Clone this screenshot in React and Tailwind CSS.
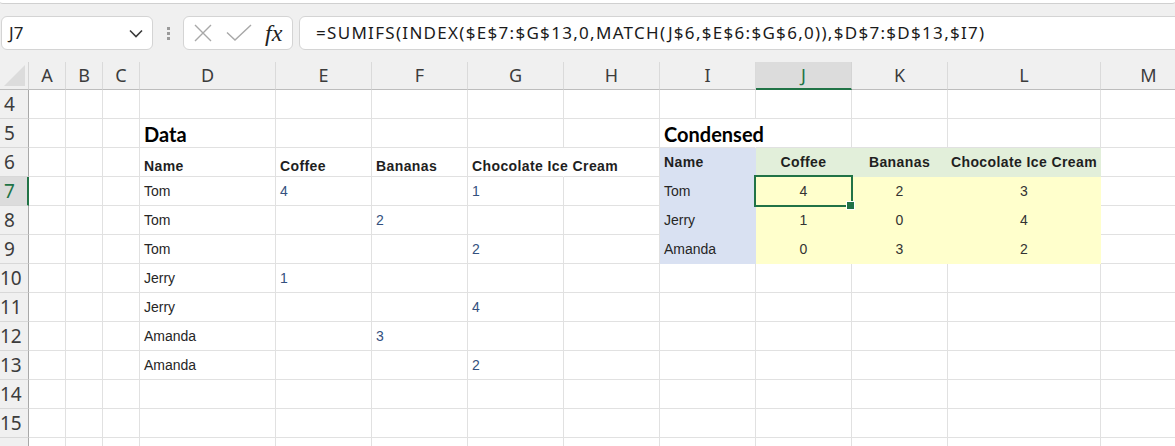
import React from "react";

const COLS = [
  { l: "A", w: "w-[37px]" },
  { l: "B", w: "w-[37px]" },
  { l: "C", w: "w-[37px]" },
  { l: "D", w: "w-[136px]" },
  { l: "E", w: "w-[96px]" },
  { l: "F", w: "w-[96px]" },
  { l: "G", w: "w-[96px]" },
  { l: "H", w: "w-[96px]" },
  { l: "I", w: "w-[96px]" },
  { l: "J", w: "w-[96px]" },
  { l: "K", w: "w-[96px]" },
  { l: "L", w: "w-[153px]" },
  { l: "M", w: "w-[96px]" },
];

const ROWS = [4, 5, 6, 7, 8, 9, 10, 11, 12, 13, 14, 15, 16];

const dataRows = {
  7: { D: "Tom", E: "4", G: "1" },
  8: { D: "Tom", F: "2" },
  9: { D: "Tom", G: "2" },
  10: { D: "Jerry", E: "1" },
  11: { D: "Jerry", G: "4" },
  12: { D: "Amanda", F: "3" },
  13: { D: "Amanda", G: "2" },
};

const condensed = {
  7: ["Tom", "4", "2", "3"],
  8: ["Jerry", "1", "0", "4"],
  9: ["Amanda", "0", "3", "2"],
};

const CELL = "flex h-full shrink-0 border-r border-b px-[4px] whitespace-nowrap";
const PLAIN = "bg-white border-[#e1e1e1] items-center";
const TXT = "text-[14px] text-[#262626] font-['Liberation_Sans',Arial,sans-serif]";
const BOLD = "text-[14px] leading-[16px] font-bold tracking-[0.4px] text-[#1f1f1f] font-['Liberation_Sans',Arial,sans-serif]";
const NUM = "text-[14px] text-[#34507e] font-['Liberation_Sans',Arial,sans-serif]";
const TITLE = "text-[20px] font-bold text-black font-['Lato','Noto_Sans',sans-serif] pt-[2px]";

function cellContent(row, col) {
  if (row === 5 && col === "D")
    return { cls: PLAIN, node: <span className={TITLE}>Data</span> };
  if (row === 5 && col === "I")
    return {
      cls: "bg-white border-[#e1e1e1] border-r-white items-center relative z-10 overflow-visible",
      node: <span className={TITLE}>Condensed</span>,
    };
  if (row === 6) {
    const m = { D: "Name", E: "Coffee", F: "Bananas" };
    if (m[col]) {
      return { cls: "bg-white border-[#e1e1e1] items-end pb-[2px]", node: <span className={BOLD}>{m[col]}</span> };
    }
    if (col === "G")
      return {
        cls: "bg-white border-[#e1e1e1] border-r-white items-end pb-[2px] relative z-10 overflow-visible",
        node: <span className={BOLD}>Chocolate Ice Cream</span>,
      };
    if (col === "I")
      return { cls: "bg-[#d9e1f2] border-[#d9e1f2] items-center", node: <span className={BOLD}>Name</span> };
    const h = { J: "Coffee", K: "Bananas", L: "Chocolate Ice Cream" };
    if (h[col])
      return {
        cls: "bg-[#e2efda] border-[#e2efda] items-center justify-center",
        node: <span className={BOLD}>{h[col]}</span>,
      };
  }
  if (condensed[row]) {
    const idx = { I: 0, J: 1, K: 2, L: 3 }[col];
    if (idx === 0)
      return {
        cls: "bg-[#d9e1f2] border-[#d9e1f2] items-center",
        node: <span className={TXT}>{condensed[row][0]}</span>,
      };
    if (idx !== undefined)
      return {
        cls: "bg-[#ffffcc] border-[#ffffcc] items-center justify-center",
        node: (
          <span className="text-[14px] text-[#333333] font-['Liberation_Sans',Arial,sans-serif]">
            {condensed[row][idx]}
          </span>
        ),
      };
  }
  if (dataRows[row] && dataRows[row][col]) {
    const v = dataRows[row][col];
    return { cls: PLAIN, node: <span className={col === "D" ? TXT : NUM}>{v}</span> };
  }
  return { cls: PLAIN, node: null };
}

function XIcon() {
  return (
    <svg width="20" height="20" viewBox="0 0 20 20">
      <path d="M2 2 L18 18 M18 2 L2 18" stroke="#a8a8a8" strokeWidth="1.4" fill="none" />
    </svg>
  );
}

function CheckIcon() {
  return (
    <svg width="26" height="18" viewBox="0 0 26 18">
      <path d="M1 8.5 L9 16 L25 1" stroke="#a8a8a8" strokeWidth="1.4" fill="none" />
    </svg>
  );
}

function Chevron() {
  return (
    <svg width="14" height="9" viewBox="0 0 14 9">
      <path d="M1 1.5 L7 7.5 L13 1.5" stroke="#3a3a3a" strokeWidth="1.6" fill="none" />
    </svg>
  );
}

export default function App() {
  return (
    <div className="w-[1175px] h-[446px] overflow-hidden bg-[#f0f0f0] relative">
      {/* top strip */}
      <div className="h-[4px] bg-white border-b border-[#d0d0d0] rounded-b-[6px] mx-[-1px]" />

      {/* formula bar */}
      <div className="flex items-center h-[34px] mt-[12px]">
        <div className="shrink-0 ml-[1px] w-[152px] h-full bg-white border border-[#d4d4d4] rounded-[6px] flex items-center justify-between pl-[7px] pr-[9px]">
          <span className="text-[17px] text-[#222] font-['Noto_Sans',sans-serif]">J7</span>
          <Chevron />
        </div>
        <div className="shrink-0 ml-[14px] flex flex-col gap-[2px] w-[3px]">
          <div className="w-[3px] h-[3px] bg-[#9a9a9a]" />
          <div className="w-[3px] h-[3px] bg-[#9a9a9a]" />
          <div className="w-[3px] h-[3px] bg-[#9a9a9a]" />
        </div>
        <div className="shrink-0 ml-[13px] w-[110px] h-full bg-white border border-[#d4d4d4] rounded-[6px] flex items-center pl-[9px]">
          <XIcon />
          <div className="ml-[13px]">
            <CheckIcon />
          </div>
          <span className="ml-[13px] text-[24px] italic text-[#222] font-['Liberation_Serif',serif] leading-none">
            fx
          </span>
        </div>
        <div className="shrink-0 ml-[6px] w-[900px] h-full bg-white border border-[#d4d4d4] rounded-[6px] flex items-center pl-[16px]">
          <span className="text-[17px] tracking-[1.3px] text-[#1a1a1a] font-['Noto_Sans',sans-serif] whitespace-nowrap">
            =SUMIFS(INDEX($E$7:$G$13,0,MATCH(J$6,$E$6:$G$6,0)),$D$7:$D$13,$I7)
          </span>
        </div>
      </div>

      {/* grid */}
      <div className="mt-[12px] relative">
        {/* column header */}
        <div className="flex h-[28px]">
          <div className="w-[29px] shrink-0 h-full border-r border-b border-r-[#d4d4d4] border-b-[#bdbdbd] flex items-end justify-end pb-[3px] pr-[3px]">
            <svg width="21" height="21" viewBox="0 0 21 21">
              <path d="M21 0 L21 21 L0 21 Z" fill="#dcdcdc" />
            </svg>
          </div>
          {COLS.map((c) =>
            c.l === "J" ? (
              <div
                key={c.l}
                className={`${c.w} shrink-0 h-full bg-[#dcdcdc] border-r border-r-[#d4d4d4] border-b-2 border-b-[#217346] flex items-center justify-center text-[18px] text-[#217346] font-['Noto_Sans',sans-serif]`}
              >
                {c.l}
              </div>
            ) : (
              <div
                key={c.l}
                className={`${c.w} shrink-0 h-full border-r border-r-[#dadada] border-b border-b-[#bdbdbd] flex items-center justify-center text-[18px] text-[#3c3c3c] font-['Noto_Sans',sans-serif]`}
              >
                {c.l}
              </div>
            )
          )}
        </div>

        {ROWS.map((r) => (
          <div key={r} className="flex h-[29px]">
            <div
              className={`w-[29px] shrink-0 h-full border-b border-b-[#d8d8d8] flex items-center ${
                r === 7
                  ? "bg-[#dcdcdc] border-r-2 border-r-[#217346] text-[#217346]"
                  : "border-r border-r-[#a8a8a8] text-[#3c3c3c]"
              }`}
            >
              {r !== 16 && (
                <span className="w-[19px] text-center text-[19px] font-['Noto_Sans',sans-serif] leading-none">{r}</span>
              )}
            </div>
            {COLS.map((c) => {
              const { cls, node } = cellContent(r, c.l);
              return (
                <div key={c.l} className={`${CELL} ${c.w} ${cls}`}>
                  {node}
                </div>
              );
            })}
          </div>
        ))}

        {/* selection J7 */}
        <div className="absolute left-[754px] top-[113px] w-[99px] h-[32px] border-2 border-[#217346] pointer-events-none z-20" />
        <div className="absolute left-[846px] top-[139px] w-[7px] h-[7px] bg-[#217346] border border-white box-content z-20" />
      </div>
    </div>
  );
}
